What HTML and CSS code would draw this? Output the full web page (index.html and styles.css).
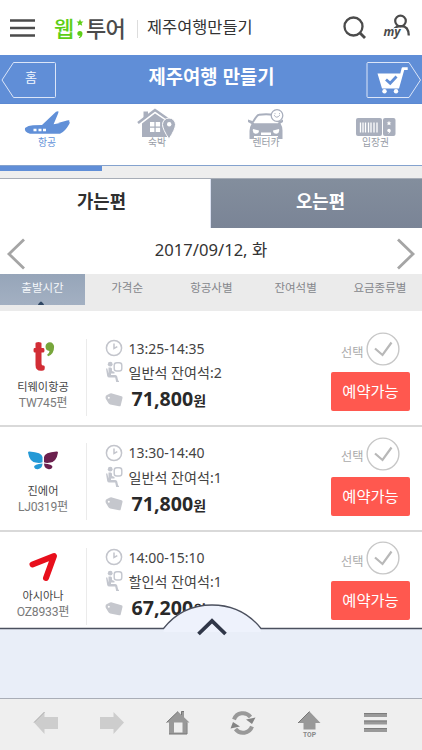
FILE: index.html
```html
<!DOCTYPE html>
<html lang="ko">
<head>
<meta charset="utf-8">
<title>제주여행 만들기</title>
<link rel="stylesheet" href="styles.css">
</head>
<body>
<svg class="defs" aria-hidden="true">
  <symbol id="clock" viewBox="0 0 18 18"><circle cx="9" cy="9" r="7.6" fill="none" stroke="#c3c5cc" stroke-width="1.5"/><path d="M9 4.500V9.500L12.300 7.700" fill="none" stroke="#c3c5cc" stroke-width="1.500"/></symbol>
  <symbol id="seat" viewBox="0 0 18 22"><g fill="#c3c6ce"><circle cx="5.200" cy="3.200" r="2.400"/><path d="M3.500 6.500h2.200q1.300 0 1.300 1.500v2l2.500 1v1.500H6V14h4.300q1.600 0 1.900 1.500l1 4.200h.8v1.300h-2.800l-1-4.500H4.500Q2.500 16.500 2.200 15L1 7.500h1.300l1.200 5z"/></g><rect x="9.200" y="1.800" width="7.600" height="8.200" rx="2.600" fill="none" stroke="#c3c6ce" stroke-width="1.400"/></symbol>
  <symbol id="tag" viewBox="0 0 18 16"><path d="M.5 5.300Q.5 3.600 2 3L5 1.600q1-.5 2-.2L16.500 4.200q1.300.4 1 1.700l-1.800 7.500q-.3 1.200-1.600.9L5.200 12.400q-1-.2-1.700-1.200L1.200 7.600Q.5 6.600.5 5.300Z" fill="#c5c7cd"/><circle cx="3.800" cy="5.800" r="1" fill="#fff"/></symbol>
  <symbol id="check" viewBox="0 0 34 34"><circle cx="17" cy="17" r="15.900" fill="none" stroke="#c7c7c7" stroke-width="1.400"/><path d="M9 16.500l7.500 6.500L25.500 10.500" fill="none" stroke="#b8b8b8" stroke-width="2.200"/></symbol>
</svg>
<main class="screen">
  <header class="top">
    <svg class="burger" viewBox="0 0 25 18"><path d="M0 1.500h25M0 9h25M0 16.500h25" stroke="#4b4b4b" stroke-width="2.400"/></svg>
    <div class="logo"><span class="logo-web">웹</span><svg class="logo-mark" viewBox="0 0 8 22"><path d="M4 1l1 2.400 2.500.2-1.900 1.700.6 2.500L4 6.500 1.800 7.800l.6-2.500L.5 3.600 3 3.400z" fill="#5dce16"/><path d="M1.300 15.500a2.600 2.600 0 1 1 5.200 0q0 3.500-3.300 4.800l-.5-.9q1.700-.8 1.700-1.600-3.100.2-3.100-2.300z" fill="#5dce16"/></svg><span class="logo-tour">투어</span></div>
    <span class="divider"></span>
    <span class="top-title">제주여행만들기</span>
    <svg class="search" viewBox="0 0 24 24"><circle cx="10.500" cy="10.500" r="9" fill="none" stroke="#4b4b4b" stroke-width="2.300"/><path d="M16.500 16.500l5.500 5.500" stroke="#4b4b4b" stroke-width="2.800"/></svg>
    <svg class="my" viewBox="0 0 28 26"><circle cx="17.500" cy="7" r="5.300" fill="none" stroke="#4b4b4b" stroke-width="2.200"/><path d="M11 15.500q2-3 5.500-3.300h2q7 0 7.300 9.300" fill="none" stroke="#4b4b4b" stroke-width="2.300"/><text x="0.500" y="22" class="my-text" textLength="17">my</text></svg>
  </header>
  <nav class="bar">
    <div class="home"><svg viewBox="0 0 55 38"><path d="M1 19L12.500 1.500h41a1 1 0 0 1 1 1v33a1 1 0 0 1-1 1h-41z" fill="none" stroke="#dbe5f8"/></svg><span>홈</span></div>
    <h1>제주여행 만들기</h1>
    <svg class="cart" viewBox="0 0 55 38"><path d="M54.500 19L43 1.500H2a1 1 0 0 0-1 1v33a1 1 0 0 0 1 1h41z" fill="none" stroke="#dbe5f8"/><path d="M11.500 12.500h22.800L35.700 7q.2-.7 1-.7h5v2.600h-3.500L33 27.500H16z" fill="#fff"/><circle cx="18.500" cy="30.200" r="2.200" fill="#fff"/><circle cx="30" cy="30.200" r="2.200" fill="#fff"/><path d="M20 18.500l4.200 3.800L30.500 15.500" fill="none" stroke="#608ed7" stroke-width="2.800"/></svg>
  </nav>
  <nav class="types">
    <div class="type on"><svg viewBox="0 0 46 24"><path d="M1 17q3-2.700 8-2.700l9-.4L32 .8q2-1 2.500-.3 0 1-.5 2.200l-4.400 10.500 8-1.400 4-.7 4.400.1q-.3 1-1 2.200-4 7-9 9.400H6q-6-1.500-5-5.800z" fill="#6190d8"/><path d="M9.500 19h3M14.500 19h3M19 19h3" stroke="#fff" stroke-width="2.500"/><path d="M34 12L43 9.500q2.800-.8 2.500.7l-2 3z" fill="#6190d8"/></svg><span>항공</span></div>
    <div class="type"><svg class="house" viewBox="0 0 40 30"><path d="M1 15L18 2l15 10.500" fill="none" stroke="#a9afbd" stroke-width="2.500"/><path d="M5 15.500L18 5.500l15 10V29H5zM6.500 3.500H11v5l-4.500 3z" fill="#a9afbd"/><path d="M13 14h4.400v4.400H13zM18.700 14h4.400v4.400h-4.400zM13 19.700h4.400v4.400H13zM18.700 19.700h4.400v4.400h-4.400z" fill="#fff"/><path d="M32 31q-6.500-10-6.500-14.500a6.500 6.500 0 0 1 13 0Q38.500 21 32 31z" fill="#a9afbd" stroke="#fff" stroke-width="1"/><circle cx="32.200" cy="16.200" r="2.200" fill="#fff"/></svg><span>숙박</span></div>
    <div class="type"><svg class="car" viewBox="0 0 38 30"><path d="M6 13Q10 6 12 5.800q7-1 14.500 0Q29 6 31.500 13" fill="none" stroke="#a9afbd" stroke-width="2"/><path d="M1 10.500l5 1.800 1 2h24l1-2 4-1.800v2.500l-2.500 1.500q2 3 2 7V30h-4.500v-3H7v3H2.500v-8q0-4 2-7L1 13z" fill="#a9afbd"/><path d="M6 20l6 1.500q0 3.300-3.500 3.300Q5 24 6 20zM32 20l-6 1.500q0 3.300 3.500 3.300Q33 24 32 20zM14 23.500h10V26H14z" fill="#fff"/><circle cx="30" cy="6.500" r="5.800" fill="#fff" stroke="#a9afbd" stroke-width="1.300"/><path d="M27.200 6.200q2.300 4 5.600 0M27.500 4.700h1M32 4.700h1" fill="none" stroke="#a9afbd"/></svg><span>렌터카</span></div>
    <div class="type"><svg class="ticket" viewBox="0 0 40 18"><rect width="26" height="18" rx="2" fill="#a9afbd"/><rect x="27" width="12.500" height="18" rx="2" fill="#a9afbd"/><path d="M4.500 4.500v10M7 4.500v10M9.500 4.500v10M12.500 4.500v10M15 4.500v10M18 4.500v10M21 4.500v10" stroke="#fff" stroke-width="1.300"/><path d="M33 2.800l.7 1.600 1.700.1-1.300 1.100.5 1.700-1.600-.9-1.600.9.500-1.700-1.300-1.100 1.700-.1z" fill="#fff"/><circle cx="33" cy="12.500" r="1.700" fill="#fff"/><path d="M34 13q0 1.800-1.400 2.300" fill="none" stroke="#fff"/></svg><span>입장권</span></div>
  </nav>
  <div class="progress"><span></span></div>
  <div class="ways"><div class="way current">가는편</div><div class="way">오는편</div></div>
  <div class="date">
    <svg viewBox="0 0 18 32"><path d="M17 1.500L2 16l15 14.500" fill="none" stroke="#a5a5a5" stroke-width="2.800"/></svg>
    <span>2017/09/12, 화</span>
    <svg viewBox="0 0 18 32"><path d="M1 1.500L16 16 1 30.500" fill="none" stroke="#a5a5a5" stroke-width="2.800"/></svg>
  </div>
  <div class="sort"><span class="on">출발시간<svg viewBox="0 0 6 4"><path d="M0 4q0-1 1.200-2Q3-1 4.800 2 6 3 6 4z" fill="#2f4763"/></svg></span><span>가격순</span><span>항공사별</span><span>잔여석별</span><span>요금종류별</span></div>
  <section class="list">
    <article class="flight">
      <div class="airline"><svg viewBox="0 0 32 32"><path d="M8.500 2.500q0-1.500 3-1.500t3 1.500V7h1.800q1.200 0 1.200 2.200t-1.200 2.200h-1.800v11q0 2 1.500 2h.8q1 0 1 2.400t-1.500 2.700Q8.500 31 8.500 24V11.500h-1Q6.500 11.500 6.500 9.200T7.500 7h1z" fill="#d22d35"/><path d="M18.500 5.500a4.300 4.300 0 1 1 8.600.2q0 7.300-6 9.600l-1-1.600q2.400-1.500 2.400-3.700-4-.5-4-4.500z" fill="#77a63b"/></svg><b>티웨이항공</b><i>TW745편</i></div>
      <div class="info"><div class="time"><svg><use href="#clock"/></svg><span>13:25-14:35</span></div><div class="class"><svg><use href="#seat"/></svg><span>일반석 잔여석:2</span></div><div class="price"><svg><use href="#tag"/></svg><span><strong>71,800</strong><em>원</em></span></div></div>
      <div class="action"><div class="pick"><span>선택</span><svg><use href="#check"/></svg></div><div class="button">예약가능</div></div>
    </article>
    <article class="flight">
      <div class="airline"><svg viewBox="0 0 32 32"><path d="M1 7.500q0-1 1.500-.9Q15 7.500 15.500 12v5.200q-3 1.300-7 .3-6-1-7.500-10z" fill="#2499d6"/><path d="M7 22q0-2.700 8.500-3.500-.2 5-4.700 5.700Q8 24.500 7 22z" fill="#2499d6"/><path d="M31 7.500q0-1-1.500-.9Q17.500 7.500 17 12v5.200q2.500 1.300 6.500.3 6-1 7.500-10zM25.500 22q0-2.700-8.500-3.500.2 5 4.700 5.700 2.800.3 3.800-2.200z" fill="#6b204e"/></svg><b>진에어</b><i>LJ0319편</i></div>
      <div class="info"><div class="time"><svg><use href="#clock"/></svg><span>13:30-14:40</span></div><div class="class"><svg><use href="#seat"/></svg><span>일반석 잔여석:1</span></div><div class="price"><svg><use href="#tag"/></svg><span><strong>71,800</strong><em>원</em></span></div></div>
      <div class="action"><div class="pick"><span>선택</span><svg><use href="#check"/></svg></div><div class="button">예약가능</div></div>
    </article>
    <article class="flight">
      <div class="airline"><svg viewBox="0 0 32 32"><path d="M5.500 14.500L27 6 19 28" fill="none" stroke="#e80f1c" stroke-width="6" stroke-linecap="round" stroke-linejoin="round"/></svg><b>아시아나</b><i>OZ8933편</i></div>
      <div class="info"><div class="time"><svg><use href="#clock"/></svg><span>14:00-15:10</span></div><div class="class"><svg><use href="#seat"/></svg><span>할인석 잔여석:1</span></div><div class="price"><svg><use href="#tag"/></svg><span><strong>67,200</strong><em>원</em></span></div></div>
      <div class="action"><div class="pick"><span>선택</span><svg><use href="#check"/></svg></div><div class="button">예약가능</div></div>
    </article>
  </section>
  <section class="drawer"><svg viewBox="0 0 422 40"><path d="M163.500 24Q182 1 212 1t49 23v4h-97.500z" fill="#eef2fc"/><path d="M0 24.500H163.500Q182 1 212 1t49 23.500H422" fill="none" stroke="#4b505e" stroke-width="1.300"/><path d="M198.500 30L212 17l13.500 13" fill="none" stroke="#303748" stroke-width="3.800"/></svg></section>
  <footer class="tools">
    <svg viewBox="0 0 26 26"><path d="M1 12.500L11.500 2v5H25v12H11.500v5z" fill="#cdcdcd"/><path d="M1 12.500L11.500 2" stroke="#aaa" fill="none"/></svg>
    <svg viewBox="0 0 26 26"><path d="M25 12.500L14.500 2v5H1v12h13.500v5z" fill="#cdcdcd"/></svg>
    <svg viewBox="0 0 26 26"><path fill-rule="evenodd" d="M1.500 12.500L13 1.500l3 2.900V1.500h3v5.700l5.500 5.300h-2.700V24H4V12.500zM9 12.500v10h8.500v-10z" fill="#999"/><path d="M1.500 12.500L13 1.500M16.500 5V1.500H19M4 24h18V12.500" stroke="#777" fill="none"/></svg>
    <svg viewBox="0 0 26 26"><path d="M4 9.500A9.500 9.500 0 0 1 20.500 7M22 16.500A9.500 9.500 0 0 1 5.500 19" fill="none" stroke="#999" stroke-width="4"/><path d="M16 9.500l9.500-2L22 14zM10 16.500l-9.500 2L3 12z" fill="#858585"/></svg>
    <svg viewBox="0 0 26 28"><path d="M2 13L13.500 1.500 24.500 13h-5v6.500h-12V13z" fill="#999"/><path d="M2 13L13.500 1.500" stroke="#777"/><text x="7" y="26.500" class="top-label" textLength="13" lengthAdjust="spacingAndGlyphs">TOP</text></svg>
    <svg viewBox="0 0 26 26"><path d="M2 5h23M2 12.500h23M2 20h23" stroke="#999" stroke-width="4"/><path d="M2 3.500h23M2 11h23M2 18.500h23" stroke="#7c7c7c"/></svg>
  </footer>
</main>
</body>
</html>
```

FILE: styles.css
```css
* { box-sizing: border-box; }
body { margin: 0; font-family: "Noto Sans", "Noto Sans CJK KR", sans-serif; color: #333; background: #fff; }
svg { display: block; flex: none; overflow: visible; }
.defs { position: absolute; width: 0; height: 0; }
.screen { width: 422px; height: 750px; overflow: hidden; display: flex; flex-direction: column; }
.screen > * { flex: none; }

.top { height: 55px; display: flex; align-items: center; padding: 0 11px 0 10px; }
.burger { width: 25px; height: 18px; }
.logo { display: flex; align-items: center; margin: 1px 0 0 19px; font: 500 22px/30px "Noto Sans CJK KR", sans-serif; height: 30px; }
.logo-web { color: #5dce16; font-weight: 500; width: 21px; margin-top: -2px; }
.logo-mark { width: 8px; height: 22px; margin: 2px 0 0 1px; }
.logo-tour { color: #4b4b4b; letter-spacing: -.8px; width: 41px; margin: -2px 0 0 2px; white-space: nowrap; }
.divider { width: 1px; height: 18px; margin: 2px 0 0 10px; background: #ddd; }
.top-title { flex: 1; margin: -3px 0 0 9px; font: 16.400px/24px "Noto Sans CJK KR", sans-serif; }
.search { width: 24px; height: 24px; margin-right: 16px; }
.my { width: 28px; height: 26px; margin-top: -1px; }
.my-text { font: italic 700 12px "Open Sans", sans-serif; fill: #4b4b4b; stroke: #fff; stroke-width: 2px; paint-order: stroke; }

.bar { height: 49px; background: #608ed7; border-bottom: 1px solid #5c89d2; display: flex; justify-content: space-between; padding: 6px 1px 0; }
.home { display: grid; width: 55px; height: 38px; }
.home > * { grid-area: 1 / 1; }
.home svg, .cart { width: 55px; height: 38px; }
.home span { color: #f3f7ff; font: 13px/20px "Noto Sans CJK KR", sans-serif; margin: 6px 0 0 24px; }
.bar h1 { margin: 1px 0 0 1px; color: #fff; font: 700 18.800px/28px "Noto Sans CJK KR", sans-serif; }

.types { height: 61px; display: grid; grid-template-columns: 102px 110px 108px 102px; }
.type { display: grid; justify-items: center; grid-template-rows: 61px; color: #979ca6; font: 9.800px/14px "Noto Sans CJK KR", sans-serif; }
.type > * { grid-area: 1 / 1; }
.type > span { margin: 31px 0 0; text-shadow: 0 0 1px #fff; }
.type.on { color: #6190d8; }
.type.on svg { width: 46px; height: 24px; margin: 7px 0 0 -8px; }
.type.on span { margin-left: -8px; }
.type .house { width: 40px; height: 30px; margin-top: 4px; }
.type .car { width: 38px; height: 30px; margin-top: 5px; }
.type .ticket { width: 40px; height: 18px; margin: 14px 0 0 9px; }
.type:last-child span { margin-left: 9px; }
.progress { height: 13px; background: #eee; border-top: 1px solid #84a2ce; }
.progress span { display: block; width: 101.500px; height: 5px; background: #608ed7; }

.ways { height: 50px; display: grid; grid-template-columns: 1fr 1fr; border-top: 1px solid #a7adb7; }
.way { background: linear-gradient(#838e9d, #7a8496); color: #fff; text-align: center; font: 700 17.800px/28px "Noto Sans CJK KR", sans-serif; padding: 7px 0 0 8px; }
.way.current { background: #fff; color: #2f2f2f; padding: 7px 7px 0 0; border-right: 1px solid #dce2f2; }
.date { height: 46px; padding: 4px 7px 0; display: flex; justify-content: space-between; align-items: center; font-size: 16.600px; line-height: 24px; }
.date svg { width: 18px; height: 32px; margin-top: 2px; }
.date span { margin-top: -7px; }
.sort { height: 37px; background: #ebebeb; display: grid; grid-template-columns: 85px repeat(4, 84.250px); color: #85878b; font: 11.500px/18px "Noto Sans CJK KR", sans-serif; text-align: center; }
.sort > span { padding-top: 4px; height: 31px; white-space: nowrap; }
.sort .on { position: relative; color: #f4f7fa; background: linear-gradient(#96a5b9, #a3b0c2); }
.sort svg { position: absolute; width: 6px; height: 4px; left: 38px; bottom: 0; }

.list { height: 317px; overflow: hidden; }
.flight { height: 104.500px; display: grid; grid-template-columns: 87px 244px 80px; border-bottom: 2px solid #d9d9d9; }
.flight:first-child { height: 116px; padding-top: 11.500px; }
.airline { height: 77px; margin-top: 16px; border-right: 1px solid #ebebeb; display: flex; flex-direction: column; align-items: center; font: 11.200px/17px "Noto Sans CJK KR", sans-serif; }
.airline svg { width: 32px; height: 32px; margin: 2px 0 5px; }
.airline b { font-weight: 400; color: #444; }
.airline i { font: 12.200px/17px Roboto, "Noto Sans CJK KR", sans-serif; letter-spacing: -.25px; color: #7a7a7a; }
.info { padding: 14px 0 0 18px; }
.info > div { display: flex; align-items: center; }
.info svg { width: 18px; height: 18px; margin-right: 5.500px; }
.time { height: 23px; font-size: 14px; color: #444; }
.class { height: 25px; font-size: 14.100px; color: #444; }
.class svg { height: 22px; }
.price { height: 30px; }
.price svg { height: 16px; }
.price span { margin-left: 3px; line-height: 26px; white-space: nowrap; color: #292929; }
.price strong { font-size: 19.600px; }
.price em { font: 700 14px/20px "Noto Sans CJK KR", sans-serif; }
.action { padding-top: 9.500px; width: 80px; }
.pick { height: 34px; display: flex; padding-left: 10px; align-items: center; color: #aaa; font: 12.200px/18px "Noto Sans CJK KR", sans-serif; }
.pick span { width: 25px; padding-top: 5px; white-space: nowrap; }
.pick svg { width: 34px; height: 34px; }
.button { height: 39px; margin-top: 6px; border-radius: 2px; background: #ff584f; color: #fff; text-align: center; font: 15.300px/37px "Noto Sans CJK KR", sans-serif; width: 79px; }

.drawer { height: 71px; background: #e9eef8; border-bottom: 1px solid #a9adb7; }
.drawer svg { position: relative; width: 422px; height: 40px; margin-top: -24px; }
.tools { height: 51px; background: #efefef; padding: 11px 34px 0 33px; display: flex; justify-content: space-between; }
.tools svg { width: 26px; height: 26px; }
.tools svg:nth-child(5) { height: 28px; }
.top-label { font: 700 7px Roboto, sans-serif; fill: #888; }
```
